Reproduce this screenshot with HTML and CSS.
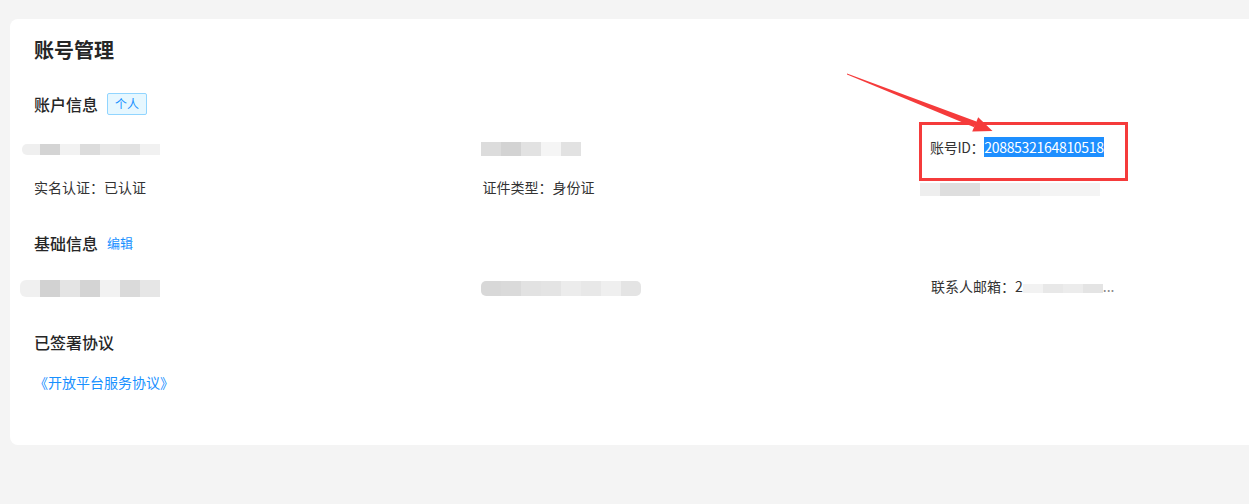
FILE: index.html
```html
<!DOCTYPE html>
<html lang="zh-CN">
<head>
  <meta charset="UTF-8" />
  <title>账号管理</title>
  <link rel="stylesheet" href="styles.css">
</head>
<body>
  <div class="page">
    <div class="card">
      <h1 class="title">账号管理</h1>

      <section class="section">
        <div class="section-head">
          <h2>账户信息</h2>
          <span class="tag">个人</span>
        </div>
        <div class="info-grid">
          <div class="item"><span class="blur blur-login"></span></div>
          <div class="item"><span class="blur blur-name"></span></div>
          <div class="item id-item">账号ID：<span class="selected">2088532164810518</span></div>
          <div class="item">实名认证：已认证</div>
          <div class="item">证件类型：身份证</div>
          <div class="item"><span class="blur blur-cert"></span></div>
        </div>
      </section>

      <section class="section">
        <div class="section-head">
          <h2>基础信息</h2>
          <a class="link edit">编辑</a>
        </div>
        <div class="info-grid">
          <div class="item"><span class="blur blur-contact"></span></div>
          <div class="item"><span class="blur blur-phone"></span></div>
          <div class="item">联系人邮箱：2<span class="blur blur-mail"></span><span class="dots">...</span></div>
        </div>
      </section>

      <section class="section">
        <div class="section-head">
          <h2>已签署协议</h2>
        </div>
        <a class="link agreement">《开放平台服务协议》</a>
      </section>
    </div>

    <!-- annotation over the screenshot -->
    <div class="mark-box"></div>
    <svg class="arrow" width="1249" height="504" viewBox="0 0 1249 504">
      <polygon points="847,73.4 847,74.6 974.2,127.2 976.4,121.6" fill="#f53b3b" />
      <polygon points="992.5,131 978.2,117.2 972.2,131.6" fill="#f53b3b" />
    </svg>
  </div>
</body>
</html>
```

FILE: styles.css
```css
html, body {
  margin: 0;
  overflow: hidden;
}
body {
  font-family: "Noto Sans CJK SC", "Noto Sans", sans-serif;
  background: #f4f4f4;
  color: #333;
  font-size: 14px;
}
.page {
  position: relative;
  height: 504px;
  padding-top: 19px;
  box-sizing: border-box;
}
.card {
  margin-left: 10px;
  background: #fff;
  border-radius: 8px 0 0 8px;
  padding: 17px 0 52px 24px;
  overflow: hidden;
}
.title {
  margin: 0 0 29px;
  font-size: 20px;
  line-height: 28px;
  font-weight: 700;
  color: #262626;
}
.section + .section {
  margin-top: 34px;
}
.section-head {
  display: flex;
  align-items: center;
  height: 22px;
}
.section-head h2 {
  margin: 0;
  font-size: 16px;
  line-height: 22px;
  font-weight: 500;
  color: #262626;
}
.tag {
  margin-left: 9px;
  height: 22px;
  box-sizing: border-box;
  padding: 0 7px;
  border: 1px solid #91d5ff;
  border-radius: 2px;
  background: #e6f7ff;
  color: #1890ff;
  font-size: 12px;
  line-height: 20px;
}
.link {
  color: #1890ff;
  cursor: pointer;
}
.edit {
  margin-left: 9px;
  font-size: 13px;
  line-height: 22px;
}
.agreement {
  display: block;
  margin-top: 18px;
  line-height: 22px;
}
.info-grid {
  display: grid;
  grid-template-columns: 448.5px 448.5px auto;
  row-gap: 18px;
  margin-top: 21px;
}
.item {
  line-height: 22px;
  height: 22px;
  white-space: nowrap;
  color: #333;
}
.id-item {
  margin-left: -1px;
  letter-spacing: -0.3px;
}
.selected {
  background: #1e8fff;
  color: #fff;
}

/* mosaic blocks for hidden values */
.blur {
  display: inline-block;
  vertical-align: middle;
}
.blur-login {
  margin-left: -12px;
  width: 138px;
  height: 11px;
  border-radius: 5px 0 0 5px;
  background: linear-gradient(to right, #efefef 0 18px, #d4d4d4 18px 38px, #f2f2f2 38px 58px, #dcdcdc 58px 78px, #e8e8e8 78px 98px, #e2e2e2 98px 118px, #f1f1f1 118px);
}
.blur-name {
  margin-left: -2px;
  width: 100px;
  height: 14px;
  background: linear-gradient(to right, #dcdcdc 0 20px, #d3d3d3 20px 40px, #e2e2e2 40px 60px, #f5f5f5 60px 80px, #e2e2e2 80px);
}
.blur-cert {
  margin-left: -11px;
  width: 180px;
  height: 13px;
  background: linear-gradient(to right, #eeeeee 0 20px, #dedede 20px 60px, #f0f0f0 60px 120px, #f4f4f4 120px);
}
.blur-contact {
  margin-left: -14px;
  width: 140px;
  height: 17px;
  border-radius: 6px 0 0 6px;
  background: linear-gradient(to right, #f0f0f0 0 20px, #d2d2d2 20px 40px, #e4e4e4 40px 60px, #d4d4d4 60px 80px, #f2f2f2 80px 100px, #dadada 100px 120px, #e6e6e6 120px);
}
.blur-phone {
  margin-left: -2px;
  width: 160px;
  height: 15px;
  border-radius: 5px;
  background: linear-gradient(to right, #d8d8d8 0 20px, #dadada 20px 40px, #e2e2e2 40px 60px, #e4e4e4 60px 80px, #ececec 80px 100px, #e8e8e8 100px 120px, #efefef 120px 140px, #e4e4e4 140px);
}
.blur-mail {
  width: 80px;
  height: 9px;
  background: linear-gradient(to right, #f2f2f2 0 20px, #e8e8e8 20px 40px, #ececec 40px 60px, #e4e4e4 60px);
}
.dots {
  color: #888;
}

/* red annotation */
.mark-box {
  position: absolute;
  left: 919px;
  top: 122px;
  width: 209px;
  height: 59px;
  box-sizing: border-box;
  border: 3px solid #f53b3b;
}
.arrow {
  position: absolute;
  left: 0;
  top: 0;
}
```
